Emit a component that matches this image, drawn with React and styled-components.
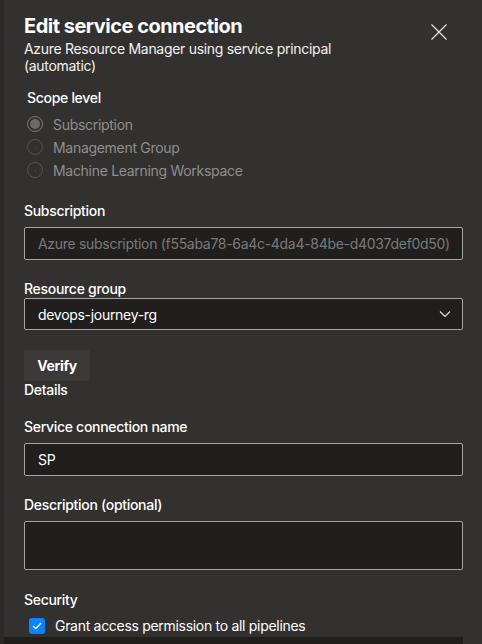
import React from "react";
import styled, {createGlobalStyle} from "styled-components";

const GlobalStyle = createGlobalStyle`
  html, body {
    margin: 0;
    padding: 0;
    background: #323130;
  }
  body {
    font-family: Inter, "Open Sans", "Liberation Sans", sans-serif;
    color: #ffffff;
    letter-spacing: -0.3px;
  }
`;

const Page = styled.div`
  display: flex;
  width: 482px;
  height: 644px;
  overflow: hidden;
  background: #323130;
`;

const Edge = styled.div`
  width: 4px;
  flex-shrink: 0;
  background: #2b2a29;
`;

const Panel = styled.div`
  flex: 1;
  min-width: 0;
  padding: 12px 19px 0 20px;
  display: flex;
  flex-direction: column;
  & > * {
    flex-shrink: 0;
  }
`;

const Header = styled.div`
  display: flex;
  justify-content: space-between;
  align-items: flex-start;
`;

const Title = styled.h1`
  margin: 0;
  font-size: 20px;
  font-weight: 700;
  line-height: 28px;
  letter-spacing: -0.5px;
`;

const Subtitle = styled.div`
  font-size: 14px;
  line-height: 17px;
  color: #f3f2f1;
  width: 330px;
`;

const Close = styled.button`
  background: none;
  border: none;
  padding: 0;
  margin: 12px 16px 0 0;
  width: 16px;
  height: 16px;
  cursor: pointer;
`;

const Label = styled.div`
  font-size: 14px;
  line-height: 18px;
  font-weight: 500;
  margin-top: ${p => p.$top || 0}px;
  margin-bottom: ${p => p.$bottom || 0}px;
  padding-left: ${p => p.$indent || 0}px;
`;

const RadioList = styled.div`
  display: flex;
  flex-direction: column;
  gap: 5px;
  margin-top: 8px;
  padding-left: 3px;
`;

const RadioRow = styled.div`
  display: flex;
  align-items: center;
  gap: 10px;
  height: 18px;
  font-size: 14px;
  color: #8f8e8d;
`;

const RadioCircle = styled.span`
  width: 16px;
  height: 16px;
  box-sizing: border-box;
  border-radius: 50%;
  border: 1px solid ${p => (p.$checked ? "#7a7978" : "#555453")};
  display: flex;
  align-items: center;
  justify-content: center;
  &::after {
    content: "";
    width: ${p => (p.$checked ? 10 : 1)}px;
    height: ${p => (p.$checked ? 10 : 1)}px;
    border-radius: 50%;
    background: ${p => (p.$checked ? "#6b6a69" : "#555453")};
  }
`;

const Field = styled.div`
  box-sizing: border-box;
  height: ${p => p.$height || 33}px;
  border: 1px solid #a6a5a4;
  border-radius: 2px;
  background: #201f1e;
  display: flex;
  align-items: ${p => (p.$multiline ? "flex-start" : "center")};
  justify-content: space-between;
  padding: 0 11px 0 13px;
  font-size: 14px;
  color: ${p => (p.$muted ? "#7b7a79" : "#ffffff")};
  white-space: nowrap;
  overflow: hidden;
`;

const VerifyButton = styled.button`
  align-self: flex-start;
  margin-top: 20px;
  height: 31px;
  width: 66px;
  padding: 0;
  border: none;
  border-radius: 2px;
  background: #3b3a39;
  color: #ffffff;
  font-family: inherit;
  letter-spacing: -0.3px;
  font-size: 14px;
  font-weight: 700;
`;

const CheckRow = styled.div`
  display: flex;
  align-items: center;
  gap: 10px;
  margin-top: 8px;
  padding-left: 5px;
  font-size: 14px;
`;

const CheckBox = styled.span`
  width: 16px;
  height: 16px;
  border-radius: 3px;
  background: #0a84ff;
  display: flex;
  align-items: center;
  justify-content: center;
`;

const NextBar = styled.div`
  margin: 3px 0 0 -20px;
  height: 20px;
  background: #201f1e;
`;

const scopes = [
  {label: "Subscription", checked: true},
  {label: "Management Group"},
  {label: "Machine Learning Workspace"},
];

export default function App() {
  return (
    <>
      <GlobalStyle/>
      <Page>
        <Edge/>
        <Panel>
          <Header>
            <div>
              <Title>Edit service connection</Title>
              <Subtitle>Azure Resource Manager using service principal (automatic)</Subtitle>
            </div>
            <Close aria-label="Close">
              <svg width="16" height="16" viewBox="0 0 16 16">
                <path d="M0.5 0.5L15.5 15.5M15.5 0.5L0.5 15.5" stroke="#e1dfdd" strokeWidth="1.3" fill="none"/>
              </svg>
            </Close>
          </Header>

          <Label $top={15} $indent={3}>Scope level</Label>
          <RadioList>
            {scopes.map(s => (
              <RadioRow key={s.label}>
                <RadioCircle $checked={s.checked}/>
                {s.label}
              </RadioRow>
            ))}
          </RadioList>

          <Label $top={23} $bottom={7}>Subscription</Label>
          <Field $muted>Azure subscription (f55aba78-6a4c-4da4-84be-d4037def0d50)</Field>

          <Label $top={20} $bottom={0}>Resource group</Label>
          <Field $height={32}>
            devops-journey-rg
            <svg width="12" height="8" viewBox="0 0 12 8">
              <path d="M1 1.5L6 6.5L11 1.5" stroke="#e1dfdd" strokeWidth="1.2" fill="none"/>
            </svg>
          </Field>

          <VerifyButton>Verify</VerifyButton>
          <Label>Details</Label>

          <Label $top={19} $bottom={7}>Service connection name</Label>
          <Field>SP</Field>

          <Label $top={20} $bottom={7}>Description (optional)</Label>
          <Field $height={49} $multiline/>

          <Label $top={21}>Security</Label>
          <CheckRow>
            <CheckBox>
              <svg width="10" height="8" viewBox="0 0 10 8">
                <path d="M1 4L3.8 6.6L9 1" stroke="#ffffff" strokeWidth="1.3" fill="none"/>
              </svg>
            </CheckBox>
            Grant access permission to all pipelines
          </CheckRow>
          <NextBar/>
        </Panel>
      </Page>
    </>
  );
}
